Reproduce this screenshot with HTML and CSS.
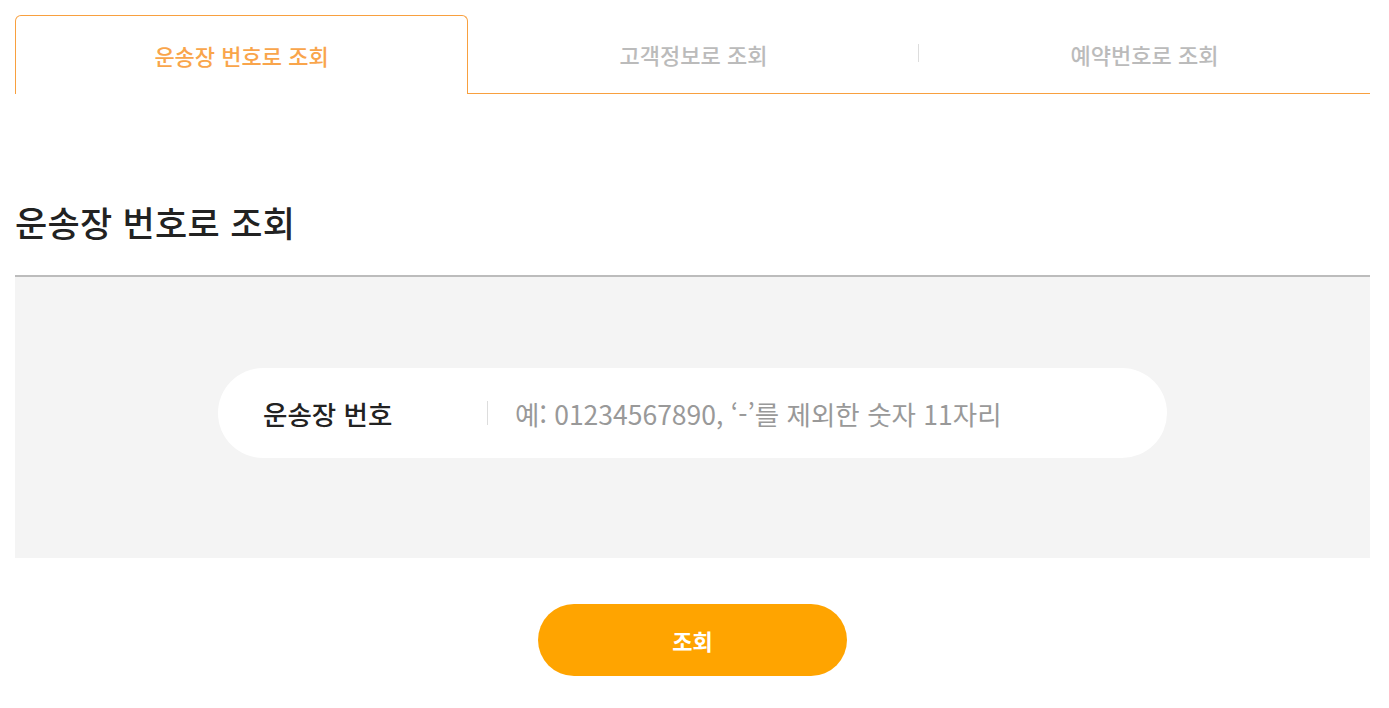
FILE: index.html
```html
<!DOCTYPE html>
<html lang="ko">
<head>
<meta charset="utf-8">
<title>운송장 번호로 조회</title>
<link rel="stylesheet" href="styles.css">
</head>
<body>
<div class="page">
  <ul class="tabs">
    <li class="tab active">운송장 번호로 조회</li>
    <li class="tab">고객정보로 조회</li>
    <li class="tab divided">예약번호로 조회</li>
  </ul>
  <h2 class="title">운송장 번호로 조회</h2>
  <div class="search-box">
    <div class="field">
      <label class="field-label" for="inv">운송장 번호</label>
      <span class="field-sep"></span>
      <input id="inv" class="field-input" type="text" placeholder="예: 01234567890, ‘-’를 제외한 숫자 11자리">
    </div>
  </div>
  <div class="actions">
    <button class="btn" type="button">조회</button>
  </div>
</div>
</body>
</html>
```
FILE: styles.css
```css
* { box-sizing: border-box; }
html, body { margin: 0; padding: 0; background: #fff; }
body {
  font-family: "Noto Sans CJK KR", "Noto Sans", sans-serif;
  color: #222;
}
.page {
  padding: 15px 19px 0 15px;
}
.tabs {
  list-style: none;
  margin: 0;
  padding: 0;
  display: flex;
}
.tab {
  flex: 1 1 0;
  height: 79px;
  display: flex;
  align-items: center;
  justify-content: center;
  font-size: 22px;
  font-weight: 500;
  color: #bbb;
  border-bottom: 1px solid #f8a03f;
  position: relative;
}
.tab.active {
  color: #f9a54b;
  border: 1px solid #f8a03f;
  border-bottom: none;
  border-radius: 6px 6px 0 0;
  background: #fff;
}
.tab.divided::before {
  content: "";
  position: absolute;
  left: -1px;
  top: 29px;
  width: 1px;
  height: 18px;
  background: #ddd;
}
.title {
  margin: 108px 0 33px;
  font-size: 35px;
  line-height: 40px;
  font-weight: 500;
  color: #222;
  letter-spacing: 0.3px;
}
.search-box {
  border-top: 2px solid #bcbcbc;
  background: #f4f4f4;
  padding: 91px 0 100px;
}
.field {
  width: 949px;
  height: 90px;
  margin: 0 auto;
  background: #fff;
  border-radius: 45px;
  display: flex;
  align-items: center;
  padding-left: 45px;
}
.field-label {
  width: 224px;
  font-size: 26.5px;
  font-weight: 500;
  color: #222;
}
.field-sep {
  width: 1px;
  height: 24px;
  background: #ddd;
}
.field-input {
  flex: 1;
  margin-left: 27px;
  border: none;
  outline: none;
  background: transparent;
  font-family: inherit;
  font-size: 26.5px;
  color: #222;
  padding: 0;
}
.field-input::placeholder {
  color: #999;
}
.actions {
  display: flex;
  justify-content: center;
  padding-top: 46px;
}
.btn {
  width: 309px;
  height: 72px;
  border: none;
  border-radius: 36px;
  background: #ffa400;
  color: #fff;
  font-family: inherit;
  font-size: 22px;
  font-weight: 700;
  cursor: pointer;
}
```
